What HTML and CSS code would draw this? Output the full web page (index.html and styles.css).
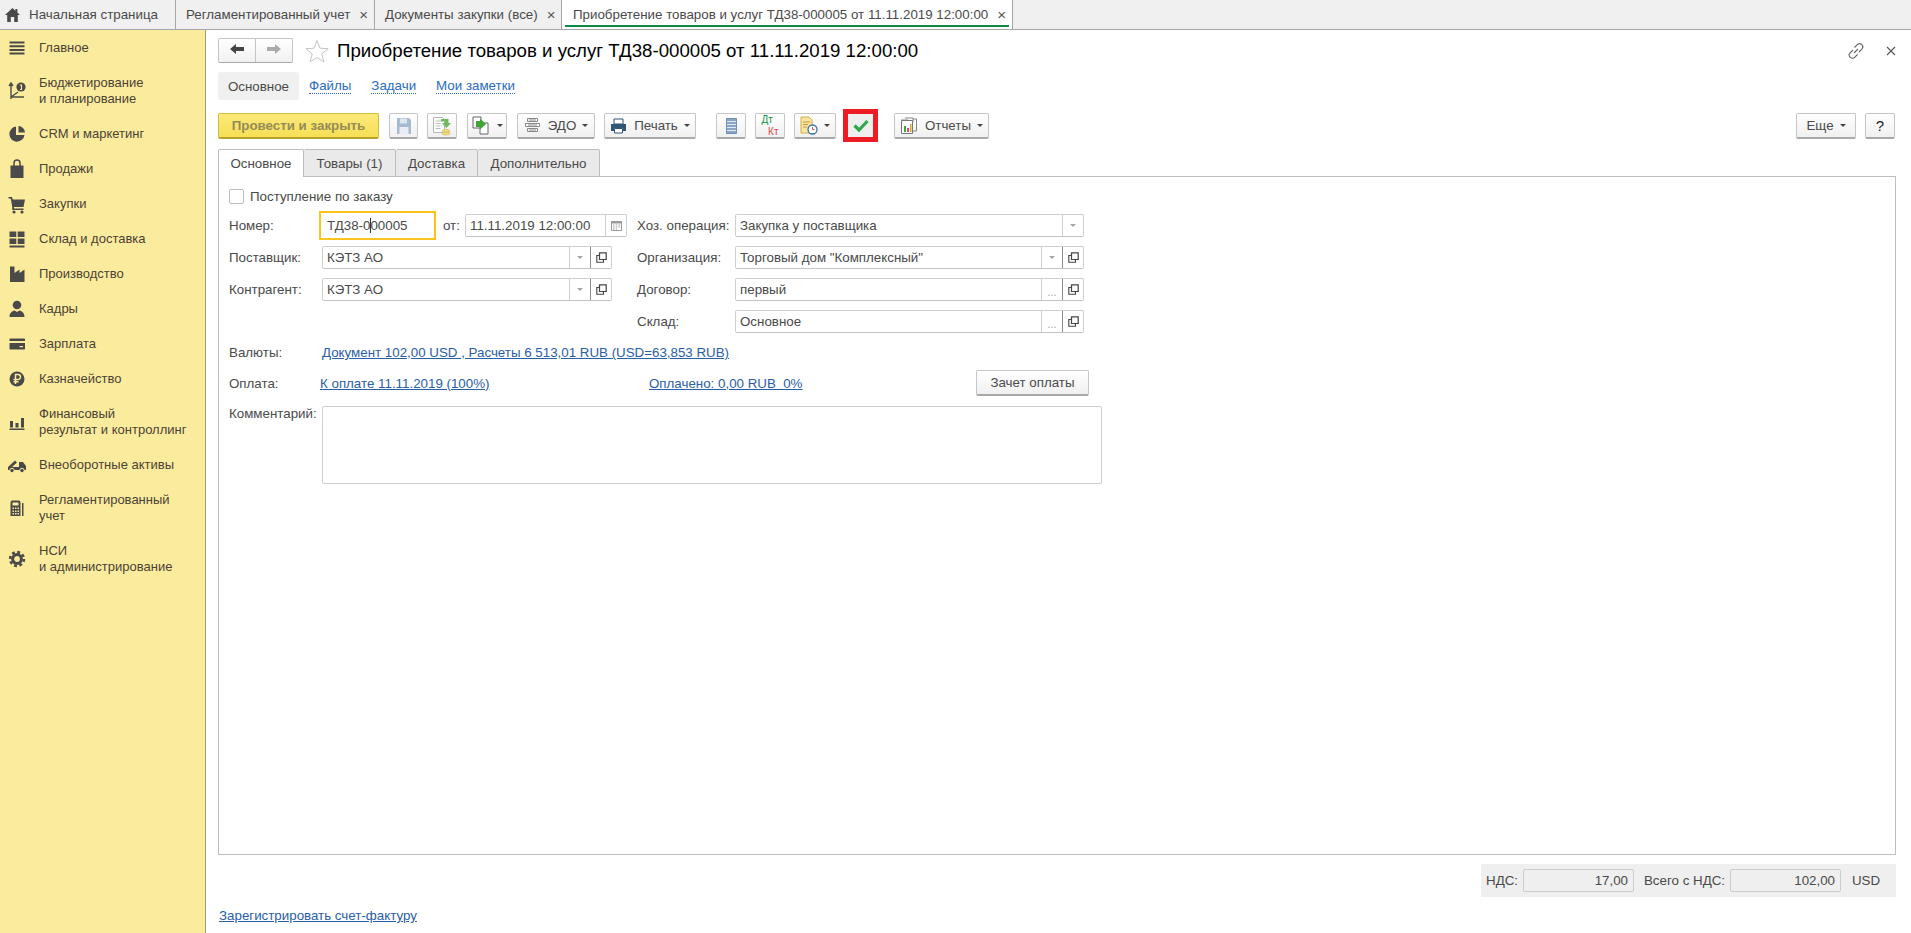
FILE: index.html
```html
<!DOCTYPE html>
<html lang="ru">
<head>
    <meta charset="UTF-8">
    <meta name="viewport" content="width=device-width, initial-scale=1.0">
    <title>Приобретение товаров и услуг</title>
    <link rel="stylesheet" href="styles.css">
</head>
<body>
    <svg class="defs" width="0" height="0">
        <symbol id="open" viewBox="0 0 11 11">
            <path d="M3.500.8h6.700v6.700H3.500z" fill="none" stroke="#444" stroke-width="1.200"/>
            <path d="M3.500 3.500H.8v6.700h6.700V7.500" fill="none" stroke="#444" stroke-width="1.100"/>
        </symbol>
    </svg>

    <!-- вкладки -->
    <div class="topbar">
        <div class="toptab toptab-home">
            <svg class="home-icon" width="15" height="14" viewBox="0 0 15 14"><path d="M7.500 0 0 7h2.200v7h3.600V9h3.400v5h3.600V7H15l-2.600-2.400V1h-2v1.700z" fill="#4a4a4a"/></svg>
            <span>Начальная страница</span>
        </div>
        <div class="toptab toptab-reg"><span>Регламентированный учет</span><i class="x">×</i></div>
        <div class="toptab toptab-docs"><span>Документы закупки (все)</span><i class="x">×</i></div>
        <div class="toptab toptab-active"><span>Приобретение товаров и услуг ТД38-000005 от 11.11.2019 12:00:00</span><i class="x">×</i></div>
    </div>

    <div class="layout">
        <!-- меню разделов -->
        <nav class="sidebar">
            <div class="side-item">
                <svg viewBox="0 0 20 20"><path d="M2.500 3.500h15v2h-15zM2.500 7.200h15v2h-15zM2.500 10.900h15v2h-15zM2.500 14.600h15v2h-15z" fill="#4a4a4a"/></svg>
                <span>Главное</span>
            </div>
            <div class="side-item">
                <svg viewBox="0 0 20 20"><path d="M4 18V3M2 5l2-3 2 3M4 16l13 0M4 16l7-5" fill="none" stroke="#4a4a4a" stroke-width="1.400"/><circle cx="14" cy="6" r="4.600" fill="#4a4a4a"/><path d="M13 8.500h1.500V4h-1.800" fill="none" stroke="#fbec9d" stroke-width="1.200"/></svg>
                <span>Бюджетирование<br>и планирование</span>
            </div>
            <div class="side-item">
                <svg viewBox="0 0 20 20"><path d="M9 2.500a7.600 7.600 0 1 0 8.500 8.500H9z" fill="#4a4a4a"/><path d="M11.500 2v6.500H18A7 7 0 0 0 11.500 2z" fill="#4a4a4a"/></svg>
                <span>CRM и маркетинг</span>
            </div>
            <div class="side-item">
                <svg viewBox="0 0 20 20"><path d="M3.500 6.500h13V19h-13z" fill="#4a4a4a"/><path d="M7 9V4a3 3 0 0 1 6 0v5" fill="none" stroke="#4a4a4a" stroke-width="1.500"/></svg>
                <span>Продажи</span>
            </div>
            <div class="side-item">
                <svg viewBox="0 0 20 20"><path d="M1.500 3H5l.8 2.500H18l-1.500 7.500H7v1.500h9.500v1.500H5.200V12.500L3.700 4.600H1.500z" fill="#4a4a4a"/><circle cx="7" cy="18" r="1.600" fill="#4a4a4a"/><circle cx="15" cy="18" r="1.600" fill="#4a4a4a"/></svg>
                <span>Закупки</span>
            </div>
            <div class="side-item">
                <svg viewBox="0 0 20 20"><path d="M2.500 2.500h6.800v5.500H2.500zM10.700 2.500h6.800v5.500h-6.800zM2.500 9.500h6.800V15H2.500zM10.700 9.500h6.800V15h-6.800zM2.500 16.500h15v2h-15z" fill="#4a4a4a"/></svg>
                <span>Склад и доставка</span>
            </div>
            <div class="side-item">
                <svg viewBox="0 0 20 20"><path d="M3 18V2.500h4.500V9l5-3.500V9l5-3.500V18z" fill="#4a4a4a"/></svg>
                <span>Производство</span>
            </div>
            <div class="side-item">
                <svg viewBox="0 0 20 20"><circle cx="10" cy="6" r="4.300" fill="#4a4a4a"/><path d="M2.500 18c0-4 2.500-6 5-6.500l2.500 1.500 2.500-1.500c2.500.5 5 2.500 5 6.500z" fill="#4a4a4a"/></svg>
                <span>Кадры</span>
            </div>
            <div class="side-item">
                <svg viewBox="0 0 20 20"><path d="M3 4.500h14.500a.8.8 0 0 1 .5.500v2H2.500V5a.8.8 0 0 1 .5-.5zM2.500 9H18v6a.8.8 0 0 1-.5.500H3a.8.8 0 0 1-.5-.5z" fill="#4a4a4a"/><path d="M12.500 12h3.500v1.200h-3.500z" fill="#fbec9d"/></svg>
                <span>Зарплата</span>
            </div>
            <div class="side-item">
                <svg viewBox="0 0 20 20"><circle cx="10" cy="10" r="7.500" fill="#4a4a4a"/><path d="M8.500 15V5.500h2.500a2.300 2.300 0 0 1 0 5H6.500M6.500 12.800h5" fill="none" stroke="#fbec9d" stroke-width="1.500"/></svg>
                <span>Казначейство</span>
            </div>
            <div class="side-item">
                <svg viewBox="0 0 20 20"><path d="M3 9h3v6.500H3zM8.500 11h3v4.500h-3zM14 6h3v9.500h-3zM2.500 16.500h15V18h-15z" fill="#4a4a4a"/></svg>
                <span>Финансовый<br>результат и контроллинг</span>
            </div>
            <div class="side-item">
                <svg viewBox="0 0 20 20"><path d="M1 12 8 5.500l2 2L5 12h7V7h4l3 4v4H1z" fill="#4a4a4a"/><circle cx="5" cy="15.500" r="2.200" fill="#4a4a4a" stroke="#fbec9d"/><circle cx="15" cy="15.500" r="2.200" fill="#4a4a4a" stroke="#fbec9d"/></svg>
                <span>Внеоборотные активы</span>
            </div>
            <div class="side-item">
                <svg viewBox="0 0 20 20"><path d="M3.500 4.500a2 2 0 0 1 2-2h6a2 2 0 0 1 2 2V18h-10z" fill="#4a4a4a"/><path d="M5.500 4.500h6v3h-6z" fill="#fbec9d"/><path d="M5.500 9.500h1.500V11H5.500zM8 9.500h1.500V11H8zM10.500 9.500H12V11h-1.500zM5.500 12.500h1.500V14H5.500zM8 12.500h1.500V14H8zM10.500 12.500H12V14h-1.500zM5.500 15h1.500v1.500H5.500zM8 15h1.500v1.500H8zM10.500 15H12v1.500h-1.500z" fill="#fbec9d"/><path d="M15 5h1.500v13H15z" fill="#4a4a4a"/></svg>
                <span>Регламентированный<br>учет</span>
            </div>
            <div class="side-item">
                <svg viewBox="0 0 20 20"><circle cx="10" cy="10" r="6.900" fill="none" stroke="#4a4a4a" stroke-width="2.600" stroke-dasharray="2.900 2.520"/><circle cx="10" cy="10" r="4.400" fill="none" stroke="#4a4a4a" stroke-width="3"/></svg>
                <span>НСИ<br>и администрирование</span>
            </div>
        </nav>

        <main class="content">
            <div class="doc-head">
                <div class="nav-group">
                    <button class="nav-btn">
                        <svg width="14" height="12" viewBox="0 0 14 12"><path d="M0 6l6-5v3h8v4H6v3z" fill="#444"/></svg>
                    </button>
                    <button class="nav-btn">
                        <svg width="14" height="12" viewBox="0 0 14 12"><path d="M14 6L8 1v3H0v4h8v3z" fill="#aaa"/></svg>
                    </button>
                </div>
                <svg class="star" width="24" height="24" viewBox="0 0 24 24"><path d="M12 1.500l3 7.700 8.200.5-6.400 5.200 2.100 8L12 18.500l-6.900 4.400 2.100-8L.8 9.700 9 9.200z" fill="none" stroke="#c4c4c4"/></svg>
                <h1 class="doc-title">Приобретение товаров и услуг ТД38-000005 от 11.11.2019 12:00:00</h1>
                <div class="head-tools">
                    <svg width="18" height="18" viewBox="0 0 18 18"><path d="M7.500 5.500l2.800-2.800a3 3 0 0 1 4.500 4.500l-2.800 2.800M10.500 12.500l-2.800 2.800a3 3 0 0 1-4.500-4.500L6 8M7 11l4-4" fill="none" stroke="#666" stroke-width="1.100"/></svg>
                    <svg width="10" height="10" viewBox="0 0 10 10"><path d="M1 1l8 8M9 1l-8 8" stroke="#555" stroke-width="1.100"/></svg>
                </div>
            </div>

            <div class="sublinks">
                <span class="sublink-current">Основное</span>
                <a class="sublink sublink-files">Файлы</a>
                <a class="sublink sublink-tasks">Задачи</a>
                <a class="sublink sublink-notes">Мои заметки</a>
            </div>

            <div class="toolbar">
                <button class="btn tb-post">Провести и закрыть</button>
                <button class="btn tb-save">
                    <svg width="16" height="18" viewBox="0 0 16 18"><path d="M1 1h12l2 2v14H1z" fill="#a6bbd0"/><path d="M4 1.500h7v5H4z" fill="#dde5ee"/><path d="M3.500 10h9v7h-9z" fill="#e8edf3"/></svg>
                </button>
                <button class="btn tb-load">
                    <svg width="20" height="20" viewBox="0 0 20 20"><path d="M1.500 1.500h9l2 2v13h-11z" fill="#fff" stroke="#b5b5b5"/><path d="M3.500 5h6M3.500 7.500h5M3.500 10h5M3.500 12.500h5" stroke="#bdbdbd"/><path d="M9 3h4l3.500 0v4H19l-4.500 5L10 7h2.800V5.500H9z" fill="#6dbb5d"/><ellipse cx="14" cy="15" rx="4" ry="1.500" fill="#f4df86" stroke="#cdb860" stroke-width=".7"/><ellipse cx="14" cy="17.500" rx="4" ry="1.500" fill="#f4df86" stroke="#cdb860" stroke-width=".7"/></svg>
                </button>
                <button class="btn tb-move">
                    <svg width="19" height="19" viewBox="0 0 19 19"><path d="M1 1h8v11H1z" fill="#fff" stroke="#666"/><path d="M8 7h8v11H8z" fill="#fff" stroke="#666"/><path d="M4 5h4V2.500l6 5.500-6 5.500V11H4z" fill="#3fa535"/></svg>
                    <i class="caret-down"></i>
                </button>
                <button class="btn tb-edo">
                    <svg width="17" height="17" viewBox="0 0 17 17"><path d="M3.500 1.500h10v3h-10zM1.500 6.500h14v3h-14zM3.500 11.500h10v3h-10z" fill="#fff" stroke="#8a8a8a"/><path d="M5 3h7M4 8h9M5 13h7" stroke="#8a8a8a"/></svg>
                    <span>ЭДО</span>
                    <i class="caret-down"></i>
                </button>
                <button class="btn tb-print">
                    <svg width="17" height="16" viewBox="0 0 17 16"><path d="M4 1h9v5H4z" fill="#fff" stroke="#2f5577"/><path d="M1 6h15v7h-3v-3H4v3H1z" fill="#2f5577"/><path d="M4.500 10.500h8v4.500h-8z" fill="#fff" stroke="#2f5577"/></svg>
                    <span>Печать</span>
                    <i class="caret-down"></i>
                </button>
                <button class="btn tb-list">
                    <svg width="11" height="16" viewBox="0 0 11 16"><path d="M.5.500h10v15H.5z" fill="#89a7c4" stroke="#6f8fae"/><path d="M1 3.500h9M1 6.500h9M1 9.500h9M1 12.500h9" stroke="#dfe8f1"/></svg>
                </button>
                <button class="btn tb-dtkt">
                    <span class="dtkt"><b class="dt">Дт</b><b class="kt">Кт</b></span>
                </button>
                <button class="btn tb-cal">
                    <svg width="18" height="19" viewBox="0 0 18 19"><path d="M1 1h8l3 3v13H1z" fill="#f8e6a0" stroke="#cfae4e"/><path d="M3 6h7M3 8.500h5M3 11h4" stroke="#c09a3a"/><circle cx="12.500" cy="13.500" r="4.500" fill="#fff" stroke="#3f6fa5" stroke-width="1.300"/><path d="M12.500 10.800v2.700h2" fill="none" stroke="#d9534f"/></svg>
                    <i class="caret-down"></i>
                </button>
                <div class="mark">
                    <svg width="16" height="13" viewBox="0 0 16 13"><path d="M1.500 6.500l4.500 4.500 8.500-9" fill="none" stroke="#2fa84a" stroke-width="3.200"/></svg>
                </div>
                <button class="btn tb-reports">
                    <svg width="18" height="18" viewBox="0 0 18 18"><path d="M5 1h8v4M1 3h7" fill="none" stroke="#888"/><path d="M1.500 3.500h11v13h-11z" fill="#fff" stroke="#777"/><path d="M4 9h2v6H4z" fill="#3fa535"/><path d="M7 11h2v4H7z" fill="#d9534f"/><path d="M10 7h1.500v8H10z" fill="#e0a030"/><path d="M13 2h3.500v12H13" fill="none" stroke="#888"/></svg>
                    <span>Отчеты</span>
                    <i class="caret-down"></i>
                </button>
                <button class="btn tb-more"><span>Еще</span><i class="caret-down"></i></button>
                <button class="btn tb-help">?</button>
            </div>

            <div class="tabs">
                <div class="tab tab-active tab-main">Основное</div>
                <div class="tab tab-goods">Товары (1)</div>
                <div class="tab tab-ship">Доставка</div>
                <div class="tab tab-extra">Дополнительно</div>
            </div>

            <div class="panel">
                <label class="check-row"><i class="checkbox"></i><span>Поступление по заказу</span></label>

                <div class="form-cols">
                    <div class="form-col col-left">
                        <div class="row">
                            <span class="label label-number">Номер:</span>
                            <div class="number-input">ТД38-0<i class="text-caret"></i>00005</div>
                            <span class="label-from">от:</span>
                            <div class="field field-date">
                                <span class="value">11.11.2019 12:00:00</span>
                                <span class="addon">
                                    <svg width="11" height="11" viewBox="0 0 11 11"><path d="M.5 1.500h10v9H.5z" fill="none" stroke="#9a9a9a"/><path d="M.5 1h10v2.500H.5z" fill="#9a9a9a"/><path d="M2 5h1.500M4.700 5h1.500M7.500 5H9M2 7h1.500M4.700 7h1.500M7.500 7H9M2 9h1.500M4.700 9h1.500" stroke="#9a9a9a"/></svg>
                                </span>
                            </div>
                        </div>
                        <div class="row">
                            <span class="label">Поставщик:</span>
                            <div class="field field-wide">
                                <span class="value">КЭТЗ АО</span>
                                <span class="addon"><i class="arrow"></i></span>
                                <span class="addon"><svg width="11" height="11"><use href="#open"/></svg></span>
                            </div>
                        </div>
                        <div class="row">
                            <span class="label">Контрагент:</span>
                            <div class="field field-wide">
                                <span class="value">КЭТЗ АО</span>
                                <span class="addon"><i class="arrow"></i></span>
                                <span class="addon"><svg width="11" height="11"><use href="#open"/></svg></span>
                            </div>
                        </div>
                    </div>
                    <div class="form-col col-right">
                        <div class="row">
                            <span class="label label-right">Хоз. операция:</span>
                            <div class="field field-right">
                                <span class="value">Закупка у поставщика</span>
                                <span class="addon"><i class="arrow"></i></span>
                            </div>
                        </div>
                        <div class="row">
                            <span class="label label-right">Организация:</span>
                            <div class="field field-right">
                                <span class="value">Торговый дом "Комплексный"</span>
                                <span class="addon"><i class="arrow"></i></span>
                                <span class="addon"><svg width="11" height="11"><use href="#open"/></svg></span>
                            </div>
                        </div>
                        <div class="row">
                            <span class="label label-right">Договор:</span>
                            <div class="field field-right">
                                <span class="value">первый</span>
                                <span class="addon addon-dots">...</span>
                                <span class="addon"><svg width="11" height="11"><use href="#open"/></svg></span>
                            </div>
                        </div>
                        <div class="row">
                            <span class="label label-right">Склад:</span>
                            <div class="field field-right">
                                <span class="value">Основное</span>
                                <span class="addon addon-dots">...</span>
                                <span class="addon"><svg width="11" height="11"><use href="#open"/></svg></span>
                            </div>
                        </div>
                    </div>
                </div>

                <div class="row row-currency">
                    <span class="label">Валюты:</span>
                    <a class="link">Документ 102,00 USD , Расчеты 6 513,01 RUB (USD=63,853 RUB)</a>
                </div>
                <div class="row row-pay">
                    <span class="label label-pay">Оплата:</span>
                    <a class="link link-due"><u>К оплате 11.11.2019 (100%)</u></a>
                    <a class="link link-paid"><u>Оплачено: 0,00 RUB  0%</u></a>
                    <button class="btn btn-offset">Зачет оплаты</button>
                </div>
                <div class="row-comment">
                    <span class="label label-comment">Комментарий:</span>
                    <div class="comment-box"></div>
                </div>
            </div>

            <div class="totals">
                <span>НДС:</span>
                <div class="total-field total-vat">17,00</div>
                <span class="total-label">Всего с НДС:</span>
                <div class="total-field total-sum">102,00</div>
                <span class="total-cur">USD</span>
            </div>

            <a class="link invoice-link">Зарегистрировать счет-фактуру</a>
        </main>
    </div>
</body>
</html>
```

FILE: styles.css
```css
* {
    box-sizing: border-box;
}
html, body {
    margin: 0;
    height: 933px;
    overflow: hidden;
}
body {
    font-family: "Liberation Sans", Arial, sans-serif;
    font-size: 13.33px;
    color: #4a4a4a;
    background-color: #fff;
}
.defs {
    position: absolute;
}
i {
    font-style: normal;
}

/* вкладки */
.topbar {
    display: flex;
    height: 30px;
    background-color: #f0f0f0;
    border-bottom: 1px solid #a5a5a5;
}
.toptab {
    display: flex;
    align-items: center;
    position: relative;
    height: 29px;
    border-right: 1px solid #a5a5a5;
}
.toptab-home {
    width: 176px;
    padding-left: 5px;
}
.home-icon {
    margin-right: 9px;
}
.toptab-reg {
    width: 199px;
    padding-left: 10px;
}
.toptab-docs {
    width: 187px;
    padding-left: 10px;
}
.toptab-active {
    width: 451px;
    padding-left: 11px;
    background-color: #fff;
}
.toptab-active::after {
    content: "";
    position: absolute;
    left: 3px;
    right: 3px;
    bottom: 2px;
    height: 2px;
    background-color: #0f8a45;
}
.x {
    margin-left: 9px;
    font-size: 15px;
    color: #555;
}

/* левое меню */
.layout {
    display: flex;
    height: 903px;
}
.sidebar {
    width: 206px;
    flex-shrink: 0;
    background-color: #fbec9d;
    border-right: 1px solid #a39c6c;
}
.side-item {
    display: flex;
    align-items: center;
    padding: 9.5px 0 9.5px 7px;
    font-size: 13px;
    line-height: 16px;
    color: #4b4236;
}
.side-item svg {
    width: 20px;
    height: 20px;
    margin: -2px 12px -2px 0;
    flex-shrink: 0;
}

/* документ */
.content {
    flex: 1;
    min-width: 0;
    padding: 8px 15px 0 12px;
}
.doc-head {
    display: flex;
    align-items: center;
    height: 25px;
}
.nav-group {
    display: flex;
    width: 75px;
    height: 25px;
    background: linear-gradient(#fff, #f1f1f1);
    border: 1px solid #c4c4c4;
    border-bottom-color: #a8a8a8;
    border-radius: 2px;
}
.nav-btn {
    flex: 1;
    padding: 0;
    background: none;
    border: none;
    border-right: 1px solid #c4c4c4;
}
.nav-btn:last-child {
    border-right: none;
}
.star {
    margin-left: 12px;
}
.doc-title {
    margin: 0 0 0 8px;
    font-size: 18.67px;
    font-weight: normal;
    color: #000;
    white-space: nowrap;
}
.head-tools {
    display: flex;
    align-items: center;
    gap: 21px;
    margin-left: auto;
}
.sublinks {
    display: flex;
    align-items: center;
    height: 28px;
    margin-top: 9px;
}
.sublink-current {
    display: flex;
    align-items: center;
    justify-content: center;
    width: 81px;
    height: 28px;
    background-color: #f0f0f0;
    border-radius: 3px;
}
.sublink {
    color: #2a6cc0;
    border-bottom: 1px dotted #2a6cc0;
    line-height: 14px;
}
.sublink-files {
    margin-left: 10px;
}
.sublink-tasks {
    margin-left: 20px;
}
.sublink-notes {
    margin-left: 20px;
}

/* панель кнопок */
.toolbar {
    display: flex;
    height: 26px;
    margin-top: 13px;
    gap: 9px;
}
.btn {
    display: flex;
    align-items: center;
    justify-content: center;
    height: 26px;
    padding: 0;
    font-family: inherit;
    font-size: 13.33px;
    color: #4a4a4a;
    background: linear-gradient(#fff, #f0f0f0);
    border: 1px solid #c6c6c6;
    border-bottom: 2px solid #a9a9a9;
    border-radius: 2px;
}
.caret-down {
    width: 0;
    height: 0;
    margin-left: 6px;
    border-left: 3px solid transparent;
    border-right: 3px solid transparent;
    border-top: 3px solid #444;
}
.tb-post {
    width: 161px;
    font-weight: bold;
    color: #948c58;
    background: linear-gradient(#fbe97a, #f7df55);
    border-color: #d3bd3f;
    border-bottom-color: #b7a32d;
}
.tb-save {
    width: 29px;
    margin-left: 1px;
}
.tb-load {
    width: 30px;
}
.tb-move {
    width: 40px;
    margin-left: 1px;
}
.tb-edo {
    width: 78px;
    margin-left: 1px;
}
.tb-edo span, .tb-print span, .tb-reports span {
    margin-left: 7px;
}
.tb-print {
    width: 92px;
}
.tb-list {
    width: 30px;
    margin-left: 11px;
}
.tb-dtkt {
    width: 30px;
}
.dtkt {
    display: block;
    width: 17px;
    font-size: 10px;
    line-height: 11.5px;
}
.dtkt b {
    display: block;
    font-weight: normal;
}
.dt {
    color: #0b9444;
    text-align: left;
}
.kt {
    color: #e8474c;
    text-align: right;
}
.tb-cal {
    width: 42px;
}
.mark {
    display: flex;
    align-items: center;
    justify-content: center;
    width: 35px;
    height: 33px;
    margin: -4px 0 -3px -2px;
    background-color: #efefef;
    border: 5px solid #ed1c24;
}
.tb-reports {
    width: 95px;
    margin-left: 7px;
}
.tb-more {
    width: 60px;
    margin-left: auto;
}
.tb-help {
    width: 30px;
    margin-right: 1px;
    font-size: 15px;
    color: #222;
}

/* закладки */
.tabs {
    display: flex;
    height: 28px;
    margin-top: 10px;
    position: relative;
}
.tab {
    display: flex;
    align-items: center;
    justify-content: center;
    height: 28px;
    background-color: #eaeaea;
    border: 1px solid #bdbdbd;
    border-left: none;
    border-radius: 2px 2px 0 0;
}
.tab-active {
    background-color: #fff;
    border-left: 1px solid #bdbdbd;
    border-bottom: none;
}
.tab-main {
    width: 86px;
}
.tab-goods {
    width: 92px;
}
.tab-ship {
    width: 82px;
}
.tab-extra {
    width: 122px;
}
.panel {
    height: 679px;
    margin-top: -1px;
    padding: 11px 10px 0;
    border: 1px solid #bdbdbd;
}
.check-row {
    display: flex;
    align-items: center;
    height: 16px;
}
.checkbox {
    width: 15px;
    height: 15px;
    margin-right: 6px;
    background-color: #fff;
    border: 1px solid #bdbdbd;
    border-radius: 2px;
}

/* поля формы */
.form-cols {
    display: flex;
    margin-top: 10px;
    gap: 10px;
}
.form-col {
    display: flex;
    flex-direction: column;
    gap: 9px;
}
.col-left {
    width: 398px;
}
.row {
    display: flex;
    align-items: center;
    height: 23px;
}
.label {
    width: 93px;
    flex-shrink: 0;
}
.label-number {
    width: 90px;
}
.label-right {
    width: 98px;
}
.number-input {
    width: 117px;
    height: 29px;
    margin: -3px 0;
    padding-left: 6px;
    line-height: 25px;
    border: 2px solid #fac41c;
}
.text-caret {
    display: inline-block;
    width: 1px;
    height: 15px;
    margin: 0 -1px 0 0;
    vertical-align: -3px;
    background-color: #333;
}
.label-from {
    width: 22px;
    margin-left: 7px;
}
.field {
    display: flex;
    height: 23px;
    background-color: #fff;
    border: 1px solid #cfcfcf;
    border-bottom-color: #c4c4c4;
    border-radius: 2px;
}
.field-date {
    width: 162px;
}
.field-wide {
    width: 290px;
}
.field-right {
    width: 349px;
}
.value {
    flex: 1;
    padding-left: 4px;
    line-height: 21px;
    white-space: nowrap;
    overflow: hidden;
}
.addon {
    display: flex;
    align-items: center;
    justify-content: center;
    width: 21px;
    flex-shrink: 0;
    border-left: 1px solid #cfcfcf;
}
.addon + .addon {
    border-left-color: #8c8c8c;
}
.arrow {
    width: 0;
    height: 0;
    border-left: 3px solid transparent;
    border-right: 3px solid transparent;
    border-top: 3px solid #a5a5a5;
}
.addon-dots {
    align-items: flex-end;
    padding-bottom: 2px;
    font-size: 11px;
    line-height: 11px;
    color: #a5a5a5;
}
.link {
    color: #2a5ea8;
    text-decoration: underline;
    white-space: pre;
}
.row-currency {
    margin-top: 8px;
}
.row-pay {
    height: 26px;
    margin-top: 6px;
}
.label-pay {
    width: 91px;
}
.link-due {
    width: 329px;
    text-decoration: none;
}
.link-paid {
    width: 327px;
    text-decoration: none;
}
.btn-offset {
    width: 113px;
}
.row-comment {
    display: flex;
    margin-top: 10px;
}
.label-comment {
    line-height: 15px;
}
.comment-box {
    width: 780px;
    height: 78px;
    border: 1px solid #cfcfcf;
    border-radius: 2px;
}

/* итоги */
.totals {
    display: flex;
    align-items: center;
    width: 415px;
    height: 33px;
    margin: 9px 0 0 auto;
    padding-left: 5px;
    background-color: #efefef;
}
.total-field {
    width: 111px;
    height: 23px;
    padding-right: 5px;
    line-height: 21px;
    text-align: right;
    border: 1px solid #cccccc;
    border-radius: 2px;
}
.total-vat {
    margin-left: 5px;
}
.total-sum {
    margin-left: 5px;
}
.total-label {
    margin-left: 10px;
}
.total-cur {
    margin-left: 11px;
}
.invoice-link {
    display: block;
    width: max-content;
    margin: 10px 0 0 1px;
    line-height: 17px;
}
```
